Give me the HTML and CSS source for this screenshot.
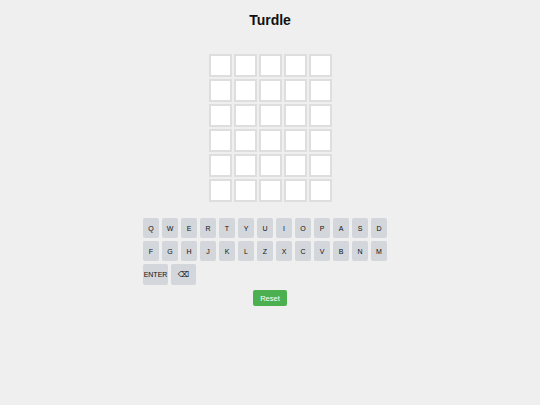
FILE: index.html
```html
<!DOCTYPE html>
<html lang="en">
<head>
<meta charset="utf-8">
<title>Turdle</title>
<link rel="stylesheet" href="styles.css">
</head>
<body>
<main class="app">
  <h1 class="title">Turdle</h1>
  <div class="board">
    <div class="tile"></div><div class="tile"></div><div class="tile"></div><div class="tile"></div><div class="tile"></div>
    <div class="tile"></div><div class="tile"></div><div class="tile"></div><div class="tile"></div><div class="tile"></div>
    <div class="tile"></div><div class="tile"></div><div class="tile"></div><div class="tile"></div><div class="tile"></div>
    <div class="tile"></div><div class="tile"></div><div class="tile"></div><div class="tile"></div><div class="tile"></div>
    <div class="tile"></div><div class="tile"></div><div class="tile"></div><div class="tile"></div><div class="tile"></div>
    <div class="tile"></div><div class="tile"></div><div class="tile"></div><div class="tile"></div><div class="tile"></div>
  </div>
  <div class="keyboard">
    <button class="key">Q</button><button class="key">W</button><button class="key">E</button><button class="key">R</button><button class="key">T</button><button class="key">Y</button><button class="key">U</button><button class="key">I</button><button class="key">O</button><button class="key">P</button><button class="key">A</button><button class="key">S</button><button class="key">D</button>
    <button class="key">F</button><button class="key">G</button><button class="key">H</button><button class="key">J</button><button class="key">K</button><button class="key">L</button><button class="key">Z</button><button class="key">X</button><button class="key">C</button><button class="key">V</button><button class="key">B</button><button class="key">N</button><button class="key">M</button>
    <button class="key key-wide">ENTER</button><button class="key key-wide key-back">⌫</button>
  </div>
  <button class="reset">Reset</button>
</main>
</body>
</html>
```

FILE: styles.css
```css
* { box-sizing: border-box; }

body {
  margin: 0;
  background: #efefef;
  font-family: "Liberation Sans", Arial, sans-serif;
  color: #111;
}

.app {
  display: flex;
  flex-direction: column;
  align-items: center;
}

.title {
  margin: 12px 0 0;
  font-size: 14px;
  line-height: 16px;
  font-weight: bold;
}

.board {
  margin-top: 26px;
  display: grid;
  grid-template-columns: repeat(5, 23px);
  grid-auto-rows: 23px;
  gap: 2px;
}

.tile {
  background: #ffffff;
  border: 2px solid #dedede;
}

.keyboard {
  margin-top: 14.5px;
  width: 257px;
  display: flex;
  flex-wrap: wrap;
  justify-content: flex-start;
}

.key {
  margin: 1.5px;
  width: 16px;
  height: 20px;
  padding: 0;
  border: none;
  border-radius: 2px;
  background: #d3d6da;
  color: #111111;
  font-family: "Liberation Sans", Arial, sans-serif;
  font-size: 7px;
  display: flex;
  align-items: center;
  justify-content: center;
}

.key-wide {
  width: 25px;
  height: 21px;
}

.key-back {
  font-family: "DejaVu Sans", sans-serif;
  font-size: 8px;
}

.reset {
  margin-top: 3.5px;
  width: 34px;
  height: 16px;
  padding: 0;
  border: none;
  border-radius: 2px;
  background: #4caf50;
  color: #ffffff;
  font-family: "Liberation Sans", Arial, sans-serif;
  font-size: 7.5px;
}
```
